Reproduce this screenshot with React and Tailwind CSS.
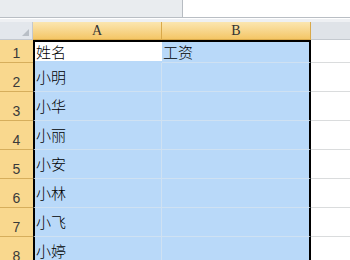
import React from "react";

const names = ["小明", "小华", "小丽", "小安", "小林", "小飞", "小婷"];

function RowHead({ n, h }) {
  return (
    <div
      className={`w-[33px] ${h} shrink-0 bg-[#f9d88e] border-b border-[#d6ae5c] flex items-end justify-center pb-[2px] text-[14px] leading-none text-[#3a3a3a]`}
      style={{ fontFamily: '"Liberation Sans", Arial, sans-serif' }}
    >
      {n}
    </div>
  );
}

export default function App() {
  const cjk = { fontFamily: '"Noto Sans CJK SC", "Noto Sans", sans-serif' };
  return (
    <div className="w-[350px] h-[260px] overflow-hidden bg-white flex flex-col">
      {/* formula bar area */}
      <div className="h-[17px] flex shrink-0">
        <div className="w-[182px] bg-[#e9ecef]" />
        <div className="flex-1 bg-white border-l border-[#b7bcc2]" />
      </div>
      <div className="h-px bg-[#b9bec4] shrink-0" />
      <div className="h-[4px] bg-[#eef0f3] border-t border-white shrink-0" />
      {/* column header */}
      <div className="h-[18px] flex shrink-0">
        <div className="w-[33px] bg-[#e3e7ec] border-r border-[#c4c9cf] border-b border-[#c4c9cf] relative">
          <div className="absolute right-[3px] bottom-[3px] w-0 h-0 border-l-[7px] border-l-transparent border-b-[7px] border-b-[#b9bfc6]" />
        </div>
        <div
          className="w-[129px] bg-gradient-to-b from-[#fbe6b0] to-[#f4c665] border-r border-[#d9a94a] border-b border-[#d9a94a] flex items-center justify-center text-[14px] text-[#333]"
          style={{ fontFamily: '"Liberation Serif", serif' }}
        >
          A
        </div>
        <div
          className="w-[149px] bg-gradient-to-b from-[#fbe6b0] to-[#f4c665] border-r border-[#d9a94a] border-b border-[#d9a94a] flex items-center justify-center text-[14px] text-[#333]"
          style={{ fontFamily: '"Liberation Serif", serif' }}
        >
          B
        </div>
        <div className="flex-1 bg-[#dfe3e8] border-b border-[#c4c9cf]" />
      </div>
      {/* row 1 */}
      <div className="flex h-[23px] shrink-0">
        <RowHead n={1} h="h-[23px]" />
        <div className="w-[129px] border-t-2 border-l-2 border-black bg-[#b9d9f9] flex">
          <div
            className="w-[127px] h-[19px] bg-white text-[15px] font-light leading-[19px] text-black pl-[1px]"
            style={cjk}
          >
            姓名
          </div>
        </div>
        <div
          className="w-[149px] border-t-2 border-r-2 border-black bg-[#b9d9f9] border-b border-b-[#cfe1f2] text-[15px] font-light leading-[19px] text-black pl-[1px]"
          style={cjk}
        >
          工资
        </div>
        <div className="flex-1 border-b border-[#dadcdd]" />
      </div>
      {names.map((n, i) => (
        <div key={n} className="flex h-[29px] shrink-0">
          <RowHead n={i + 2} h="h-[29px]" />
          <div
            className="w-[129px] border-l-2 border-black border-b border-b-[#cfe1f2] border-r border-r-[#cfe1f2] bg-[#b9d9f9] text-[15px] font-light leading-[22px] pt-[3px] text-black pl-[1px]"
            style={cjk}
          >
            {n}
          </div>
          <div className="w-[149px] border-r-2 border-black border-b border-b-[#cfe1f2] bg-[#b9d9f9]" />
          <div className="flex-1 border-b border-[#dadcdd]" />
        </div>
      ))}
    </div>
  );
}
